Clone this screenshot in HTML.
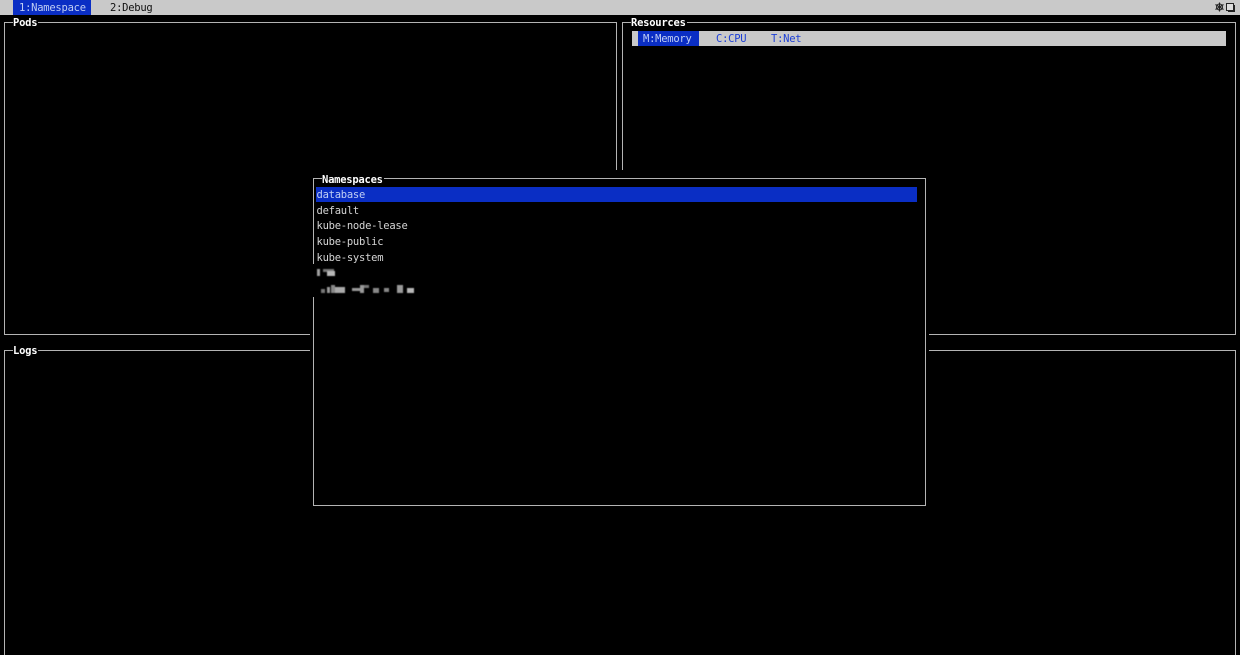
<!DOCTYPE html>
<html>
<head>
<meta charset="utf-8">
<style>
html,body{margin:0;padding:0;background:#000;width:1240px;height:655px;overflow:hidden}
#r{position:absolute;left:0;top:0;width:1240px;height:655px;background:#000;filter:blur(.35px);font-family:"DejaVu Sans Mono","Liberation Mono",monospace;font-size:10.5px;letter-spacing:-.25px}
.a{position:absolute}
.l{position:absolute;background:#b4b4b4}
.t{position:absolute;white-space:pre;line-height:14px;height:14px}
.w{color:#fff;font-weight:bold;background:#000}
.g{color:#d4d4d4}
.b{color:#1c3fd6}
.p{position:absolute;background:#b0b0b0}
#px{position:absolute;left:0;top:0;width:1240px;height:655px;filter:blur(.6px)}
</style>
</head>
<body>
<div id="r">
<!-- top bar -->
<div class="a" style="left:0;top:0;width:1240px;height:14.5px;background:#c9c9c9"></div>
<div class="a" style="left:13px;top:0;width:78px;height:14.5px;background:#0a2ec4"></div>
<div class="t" style="left:19px;top:1px;color:#c0cef4">1:Namespace</div>
<div class="t" style="left:110px;top:1px;color:#111">2:Debug</div>
<svg class="a" style="left:1214px;top:2px" width="22" height="10" viewBox="0 0 22 10">
<path d="M5.5 .5V9.5M1.5 2.5L9.5 7.5M9.5 2.5L1.5 7.5" stroke="#222" stroke-width="1.1" fill="none"/>
<circle cx="5.5" cy="5" r="3" fill="none" stroke="#222" stroke-width="1"/>
<rect x="12.5" y="1.5" width="7" height="7" fill="#ddd" stroke="#222" stroke-width="1"/>
<path d="M20.5 3V9.5H14" stroke="#222" stroke-width="1" fill="none"/>
</svg>

<!-- Pods -->
<div class="l" style="left:4px;top:22px;width:306px;height:1px"></div>
<div class="l" style="left:310px;top:22px;width:307px;height:1px"></div>
<div class="l" style="left:4px;top:22px;width:1px;height:313px"></div>
<div class="l" style="left:616px;top:22px;width:1px;height:148px"></div>
<div class="l" style="left:4px;top:334px;width:306px;height:1px"></div>
<div class="t w" style="left:13px;top:16px;padding-right:1px">Pods</div>

<!-- Resources -->
<div class="l" style="left:622px;top:22px;width:614px;height:1px"></div>
<div class="l" style="left:622px;top:22px;width:1px;height:148px"></div>
<div class="l" style="left:1235px;top:22px;width:1px;height:313px"></div>
<div class="l" style="left:929px;top:334px;width:307px;height:1px"></div>
<div class="t w" style="left:631px;top:16px;padding-right:1px">Resources</div>
<div class="a" style="left:632px;top:31px;width:594px;height:14.5px;background:#c9c9c9"></div>
<div class="a" style="left:638px;top:31px;width:60.5px;height:14.5px;background:#0a2ec4"></div>
<div class="t" style="left:643px;top:32px;color:#c0cef4">M:Memory</div>
<div class="t b" style="left:716px;top:32px">C:CPU</div>
<div class="t b" style="left:771px;top:32px">T:Net</div>

<!-- Logs -->
<div class="l" style="left:4px;top:350px;width:306px;height:1px"></div>
<div class="l" style="left:4px;top:350px;width:1px;height:305px"></div>
<div class="l" style="left:929px;top:350px;width:307px;height:1px"></div>
<div class="l" style="left:1235px;top:350px;width:1px;height:305px"></div>
<div class="t w" style="left:13px;top:344px;padding-right:1px">Logs</div>

<!-- Namespaces modal -->
<div class="l" style="left:313px;top:178px;width:613px;height:1px"></div>
<div class="l" style="left:313px;top:505px;width:613px;height:1px"></div>
<div class="l" style="left:313px;top:178px;width:1px;height:86px"></div>
<div class="l" style="left:313px;top:297px;width:1px;height:209px"></div>
<div class="l" style="left:925px;top:178px;width:1px;height:328px"></div>
<div class="t w" style="left:322px;top:173px;padding-right:1px">Namespaces</div>
<div class="a" style="left:316px;top:187px;width:601px;height:15px;background:#0a2ec4"></div>
<div class="t" style="left:316.5px;top:188px;color:#c0cef4">database</div>
<div class="t g" style="left:316.5px;top:204px">default</div>
<div class="t g" style="left:316.5px;top:219px">kube-node-lease</div>
<div class="t g" style="left:316.5px;top:235px">kube-public</div>
<div class="t g" style="left:316.5px;top:251px">kube-system</div>

<!-- pixelated items -->
<div id="px">
<div class="p" style="left:317px;top:269px;width:3px;height:7px;background:#a0a0a0"></div>
<div class="p" style="left:323px;top:269px;width:11px;height:3px;background:#777"></div>
<div class="p" style="left:327px;top:271px;width:8px;height:5px;background:#b8b8b8"></div>
<div class="p" style="left:321px;top:289px;width:4px;height:4px;background:#777"></div>
<div class="p" style="left:327px;top:287px;width:3px;height:6px;background:#999"></div>
<div class="p" style="left:331px;top:285px;width:4px;height:8px;background:#888"></div>
<div class="p" style="left:335px;top:287px;width:10px;height:6px;background:#aaa"></div>
<div class="p" style="left:352px;top:288px;width:9px;height:3px;background:#999"></div>
<div class="p" style="left:360px;top:285px;width:4px;height:8px;background:#999"></div>
<div class="p" style="left:364px;top:285px;width:5px;height:3px;background:#777"></div>
<div class="p" style="left:373px;top:288px;width:6px;height:5px;background:#888"></div>
<div class="p" style="left:384px;top:288px;width:5px;height:4px;background:#888"></div>
<div class="p" style="left:397px;top:285px;width:6px;height:8px;background:#999"></div>
<div class="p" style="left:407px;top:288px;width:7px;height:5px;background:#b8b8b8"></div>
</div>
</div>
</body>
</html>
